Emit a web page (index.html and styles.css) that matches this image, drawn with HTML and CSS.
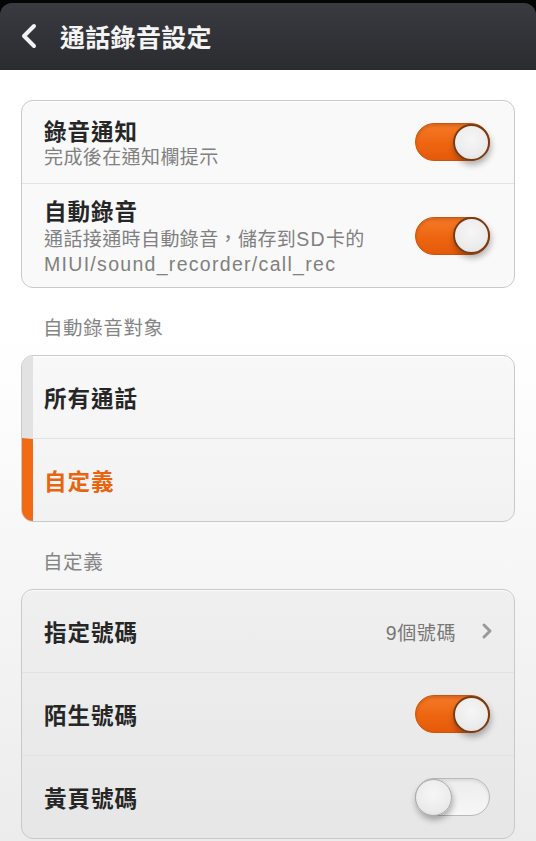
FILE: index.html
```html
<!DOCTYPE html>
<html lang="zh-Hant">
<head>
<meta charset="utf-8">
<title>通話錄音設定</title>
<link rel="stylesheet" href="styles.css">
</head>
<body>
<div class="screen">
  <header class="topbar">
    <div class="bar">
      <svg class="back" width="18" height="26" viewBox="0 0 18 26"><path d="M14 3 L4 13 L14 23" fill="none" stroke="#f2f2f2" stroke-width="4" stroke-linecap="round" stroke-linejoin="round"/></svg>
      <h1 class="title">通話錄音設定</h1>
    </div>
  </header>
  <main class="content">
    <section class="card">
      <div class="row row-notify">
        <div class="text">
          <div class="name">錄音通知</div>
          <div class="sub">完成後在通知欄提示</div>
        </div>
        <span class="switch on"><span class="knob"></span></span>
      </div>
      <div class="row row-auto">
        <div class="text">
          <div class="name">自動錄音</div>
          <div class="sub sub2">通話接通時自動錄音，儲存到<span class="latin">SD</span>卡的<br><span class="latin">MIUI/sound_recorder/call_rec</span></div>
        </div>
        <span class="switch on"><span class="knob"></span></span>
      </div>
    </section>

    <div class="label">自動錄音對象</div>

    <section class="card">
      <div class="row simple choice"><div class="name">所有通話</div></div>
      <div class="row simple choice selected"><div class="name">自定義</div></div>
    </section>

    <div class="label">自定義</div>

    <section class="card">
      <div class="row simple">
        <div class="name">指定號碼</div>
        <div class="value"><span class="count"><span class="latin">9</span>個號碼</span>
          <svg class="chev" width="12" height="18" viewBox="0 0 12 18"><path d="M3 3 L9 9 L3 15" fill="none" stroke="#9a9a9a" stroke-width="3" stroke-linecap="round" stroke-linejoin="round"/></svg>
        </div>
      </div>
      <div class="row simple">
        <div class="name">陌生號碼</div>
        <span class="switch on"><span class="knob"></span></span>
      </div>
      <div class="row simple">
        <div class="name">黃頁號碼</div>
        <span class="switch off"><span class="knob"></span></span>
      </div>
    </section>
  </main>
</div>
</body>
</html>
```

FILE: styles.css
```css
html, body {
  margin: 0;
  padding: 0;
}
body {
  width: 536px;
  height: 841px;
  overflow: hidden;
  background: linear-gradient(180deg, #ffffff 0%, #ffffff 40%, #ececec 100%);
  font-family: "Liberation Sans", "Noto Sans CJK TC", sans-serif;
  color: #222;
}
.screen {
  display: flex;
  flex-direction: column;
}
.topbar {
  background: #050505;
  height: 70px;
  display: flex;
  flex-direction: column;
}
.bar {
  margin-top: 3px;
  flex: 1;
  border-radius: 12px 12px 0 0;
  background: linear-gradient(180deg, #3a3b40 0%, #323338 50%, #2b2c30 100%);
  display: flex;
  align-items: center;
  padding-left: 20px;
  padding-bottom: 2px;
}
.back {
  display: block;
}
.title {
  margin: 0 0 0 22px;
  font-family: "Noto Sans CJK TC", sans-serif;
  font-size: 25px;
  font-weight: 700;
  color: #f4f4f4;
  letter-spacing: 0.3px;
  line-height: 30px;
}
.content {
  padding: 30px 21px 0 21px;
  display: flex;
  flex-direction: column;
}
.card {
  border: 1px solid #c9c9c9;
  border-radius: 12px;
  background: rgba(0, 0, 0, 0.025);
  overflow: hidden;
  box-shadow: inset 0 1px 0 rgba(255,255,255,0.8);
}
.row {
  display: flex;
  align-items: center;
  justify-content: space-between;
  padding: 0 24px 0 22px;
  box-sizing: border-box;
}
.row + .row {
  border-top: 1px solid #e2e2e2;
}
.row-notify {
  height: 82px;
}
.row-auto {
  height: 104px;
}
.text {
  display: flex;
  flex-direction: column;
}
.name {
  font-family: "Noto Sans CJK TC", sans-serif;
  font-size: 22.5px;
  font-weight: 700;
  line-height: 30px;
  color: #262626;
  letter-spacing: 1px;
}
.sub {
  font-size: 19px;
  line-height: 26px;
  color: #808080;
  letter-spacing: 0.4px;
}
.sub2 {
  line-height: 25px;
  margin-top: 2px;
}
.latin {
  font-family: "Liberation Sans", sans-serif;
  letter-spacing: 1.3px;
  font-size: 19.5px;
}
.row-notify .text {
  margin-top: 2px;
}
.row-auto .text {
  margin-top: 1px;
}
.simple {
  height: 82px;
}
.card .row.simple + .row.simple {
  height: 83px;
}
.choice {
  border-left: 11px solid #e2e2e2;
  padding-left: 11px;
}
.choice.selected {
  border-left-color: #f26a12;
}
.choice.selected .name {
  color: #e8640f;
}
.value {
  display: flex;
  align-items: center;
  gap: 25px;
  margin-right: -3px;
}
.count {
  font-size: 19px;
  color: #777;
  letter-spacing: 0.6px;
}
.count .latin {
  font-size: 19.5px;
  letter-spacing: 0.5px;
}
.chev {
  display: block;
}
.label {
  padding: 27px 0 14px 22px;
  font-size: 19.5px;
  line-height: 26px;
  color: #858585;
  letter-spacing: 0.6px;
}
.switch {
  width: 75px;
  height: 38px;
  border-radius: 19px;
  box-sizing: border-box;
  display: flex;
  align-items: center;
  flex: none;
}
.switch.on {
  justify-content: flex-end;
  background: linear-gradient(180deg, #f57a26 0%, #ee6511 55%, #e45a0a 100%);
  border: 1px solid #c9560f;
  box-shadow: inset 0 2px 3px rgba(120, 40, 0, 0.25);
}
.switch.off {
  justify-content: flex-start;
  background: linear-gradient(180deg, #ececec 0%, #f7f7f7 100%);
  border: 1px solid #b9b9b9;
  box-shadow: inset 0 2px 3px rgba(0, 0, 0, 0.08);
}
.knob {
  width: 37px;
  height: 37px;
  border-radius: 50%;
  box-sizing: border-box;
  background: radial-gradient(circle at 50% 40%, #f6f6f6 0%, #ececec 60%, #dcdcdc 100%);
  box-shadow: 1px 4px 6px rgba(0, 0, 0, 0.3);
}
.switch.on .knob {
  border: 2px solid #7a3b12;
  margin-right: -1px;
}
.switch.off .knob {
  border: 1px solid #a9a9a9;
  margin-left: -1px;
}
```
